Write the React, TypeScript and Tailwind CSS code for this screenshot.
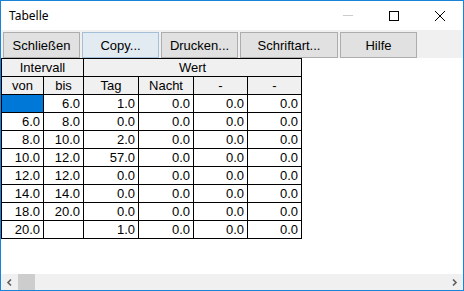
import React from 'react';

const rows: string[][] = [
  ['', '6.0', '1.0', '0.0', '0.0', '0.0'],
  ['6.0', '8.0', '0.0', '0.0', '0.0', '0.0'],
  ['8.0', '10.0', '2.0', '0.0', '0.0', '0.0'],
  ['10.0', '12.0', '57.0', '0.0', '0.0', '0.0'],
  ['12.0', '12.0', '0.0', '0.0', '0.0', '0.0'],
  ['14.0', '14.0', '0.0', '0.0', '0.0', '0.0'],
  ['18.0', '20.0', '0.0', '0.0', '0.0', '0.0'],
  ['20.0', '', '1.0', '0.0', '0.0', '0.0'],
];

const buttons = [
  { label: 'Schließen', w: 'w-[77px]', active: false },
  { label: 'Copy...', w: 'w-[77px]', active: true },
  { label: 'Drucken...', w: 'w-[77px]', active: false },
  { label: 'Schriftart...', w: 'w-[98px]', active: false },
  { label: 'Hilfe', w: 'w-[77px]', active: false },
];

const App: React.FC = () => {
  return (
    <div className="w-[464px] h-[291px] border border-[#1883d7] bg-white flex flex-col overflow-hidden font-['Segoe_UI','Noto_Sans',sans-serif] text-black">
      {/* Title bar */}
      <div className="h-[29px] flex items-center shrink-0">
        <span className="pl-[8px] text-[12px] flex-1">Tabelle</span>
        <div className="w-[46px] h-full flex items-center justify-center">
          <div className="w-[10px] h-px bg-[#cccccc]"></div>
        </div>
        <div className="w-[46px] h-full flex items-center justify-center">
          <div className="w-[10px] h-[10px] border border-black"></div>
        </div>
        <div className="w-[46px] h-full flex items-center justify-center">
          <svg width="10" height="10" viewBox="0 0 10 10">
            <path d="M0 0L10 10M10 0L0 10" stroke="#000" strokeWidth="1" />
          </svg>
        </div>
      </div>

      {/* Toolbar */}
      <div className="h-[28px] bg-[#f0f0f0] flex items-start gap-[2px] pl-[2px] pt-[2px] shrink-0 font-['Liberation_Sans',Arial,sans-serif]">
        {buttons.map((b) => (
          <button
            key={b.label}
            className={`${b.w} h-[26px] border text-[13px] leading-none flex items-center justify-center ${
              b.active ? 'bg-[#e2eaf2] border-[#a4bfd8]' : 'bg-[#e1e1e1] border-[#adadad]'
            }`}
          >
            {b.label}
          </button>
        ))}
      </div>

      {/* Grid */}
      <div className="flex-1 font-['Liberation_Sans',Arial,sans-serif] text-[13px]">
        <div className="grid grid-cols-[42px_40px_55px_55px_54px_54px] w-[301px] border-l border-t border-black">
          <div className="col-span-2 h-[18px] bg-[#f0f0f0] border-r border-b border-black flex items-center justify-center">Intervall</div>
          <div className="col-span-4 h-[18px] bg-[#f0f0f0] border-r border-b border-black flex items-center justify-center">Wert</div>
          {['von', 'bis', 'Tag', 'Nacht', '-', '-'].map((h, i) => (
            <div key={i} className="h-[18px] bg-[#f0f0f0] border-r border-b border-black flex items-center justify-center">
              {h}
            </div>
          ))}
          {rows.map((r, ri) =>
            r.map((c, ci) => (
              <div
                key={`${ri}-${ci}`}
                className={`h-[18px] border-r border-b border-black flex items-center justify-end pr-[3px] ${
                  ri === 0 && ci === 0 ? 'bg-[#0078d7]' : ''
                }`}
              >
                {c}
              </div>
            ))
          )}
        </div>
      </div>

      {/* Horizontal scrollbar */}
      <div className="h-[16px] bg-[#f0f0f0] flex items-center shrink-0">
        <div className="w-[17px] h-full flex items-center justify-center">
          <svg width="7" height="7" viewBox="0 0 7 7">
            <path d="M5 0.5L2 3.5L5 6.5" stroke="#606060" strokeWidth="1.6" fill="none" />
          </svg>
        </div>
        <div className="w-[17px] h-full bg-[#cdcdcd]"></div>
        <div className="flex-1"></div>
        <div className="w-[17px] h-full flex items-center justify-center">
          <svg width="7" height="7" viewBox="0 0 7 7">
            <path d="M2 0.5L5 3.5L2 6.5" stroke="#606060" strokeWidth="1.6" fill="none" />
          </svg>
        </div>
      </div>
    </div>
  );
};

export default App;
